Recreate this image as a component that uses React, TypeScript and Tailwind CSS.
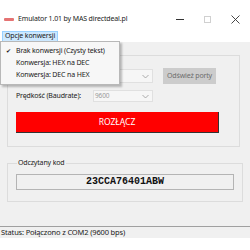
import React from "react";

const font = { fontFamily: '"Noto Sans", "Open Sans", sans-serif' };

const Chevron = () => (
    <svg width="7" height="5" viewBox="0 0 7 5" className="text-[#9a9a9a]">
        <path d="M0.5 1 L3.5 4 L6.5 1" fill="none" stroke="currentColor" strokeWidth="0.8" />
    </svg>
);

const App = () => {
    return (
        <div className="relative w-[250px] h-[250px] bg-white overflow-hidden text-[7px] tracking-[-0.15px] whitespace-nowrap text-[#1a1a1a]" style={font}>
            {/* title bar */}
            <div className="h-[30px] flex items-center pt-[8px] bg-white">
                <div className="ml-[4px] w-[10px] h-[3px] rounded-[1px] bg-[#e57373]" />
                <span className="ml-[4px] text-[#222]">Emulator 1.01 by MAS directdeal.pl</span>
                <div className="ml-auto flex items-center">
                    <div className="w-[28px] flex justify-center"><div className="w-[8px] h-[1px] bg-[#333]" /></div>
                    <div className="w-[26px] flex justify-center"><div className="w-[7px] h-[7px] border border-[#d0d0d0]" /></div>
                    <div className="w-[30px] flex justify-center">
                        <svg width="9" height="9" viewBox="0 0 9 9">
                            <path d="M0.5 0.5 L8.5 8.5 M8.5 0.5 L0.5 8.5" stroke="#333" strokeWidth="0.9" />
                        </svg>
                    </div>
                </div>
            </div>

            {/* menu bar */}
            <div className="h-[12px] flex items-center bg-white">
                <div className="ml-[2px] h-[11px] px-[2px] flex items-center bg-[#cce8ff] border border-[#99d1ff]">Opcje konwersji</div>
            </div>

            {/* body */}
            <div className="h-[184px] bg-[#f0f0f0] px-[7px] pt-[13px]">
                <fieldset className="w-[233px] h-[92px] border border-[#dcdcdc] px-[8px] pt-[12px]">
                    {/* port row (label hidden under the open menu) */}
                    <div className="flex items-center h-[16px]">
                        <span className="w-[77px]" />
                        <div className="w-[60px] h-[14px] bg-[#f6f6f6] border border-[#e0e0e0] flex items-center justify-end pr-[3px]"><Chevron /></div>
                        <div className="ml-[10px] w-[53px] h-[16px] bg-[#cccccc] text-[#6d6d6d] flex items-center justify-center">Odśwież porty</div>
                    </div>
                    <div className="flex items-center h-[14px] mt-[5px]">
                        <span className="w-[77px]">Prędkość (Baudrate):</span>
                        <div className="w-[60px] h-[12px] bg-[#f6f6f6] border border-[#e0e0e0] flex items-center justify-between pl-[1px] pr-[3px] text-[#9a9a9a] text-[6.5px]">
                            9600<Chevron />
                        </div>
                    </div>
                    <div className="mt-[9px] w-[203px] h-[21px] bg-[#ff0000] border-r border-b border-[#333] flex items-center justify-center text-white text-[8.5px] tracking-normal">ROZŁĄCZ</div>
                </fieldset>

                <fieldset className="mt-[11px] w-[233px] h-[44px] border border-[#dcdcdc] px-[8px]">
                    <legend className="ml-[1px] px-[1px]">Odczytany kod</legend>
                    <div className="mt-[5px] w-[218px] h-[16px] border border-[#b4b4b4] bg-[#f0f0f0] flex items-center justify-center font-bold text-[10px] tracking-normal text-[#111]" style={{ fontFamily: '"Liberation Mono", monospace' }}>
                        23CCA76401ABW
                    </div>
                </fieldset>
            </div>

            {/* status bar */}
            <div className="h-[12px] border-t border-[#a0a0a0] bg-[#f0f0f0] flex items-center pl-[1px] text-[7.5px]">Status: Połączono z COM2 (9600 bps)</div>

            {/* dropdown menu */}
            <div className="absolute left-0 top-[41px] w-[120px] bg-[#f7f7f7] border border-[#b8b8b8] shadow-[2px_2px_2px_rgba(0,0,0,0.25)] py-[3px]">
                <div className="h-[12px] flex items-center">
                    <span className="w-[15px] flex justify-center text-[6px]">✔</span>Brak konwersji (Czysty tekst)
                </div>
                <div className="h-[12px] flex items-center pl-[15px]">Konwersja: HEX na DEC</div>
                <div className="h-[12px] flex items-center pl-[15px]">Konwersja: DEC na HEX</div>
            </div>
        </div>
    );
};

export default App;
